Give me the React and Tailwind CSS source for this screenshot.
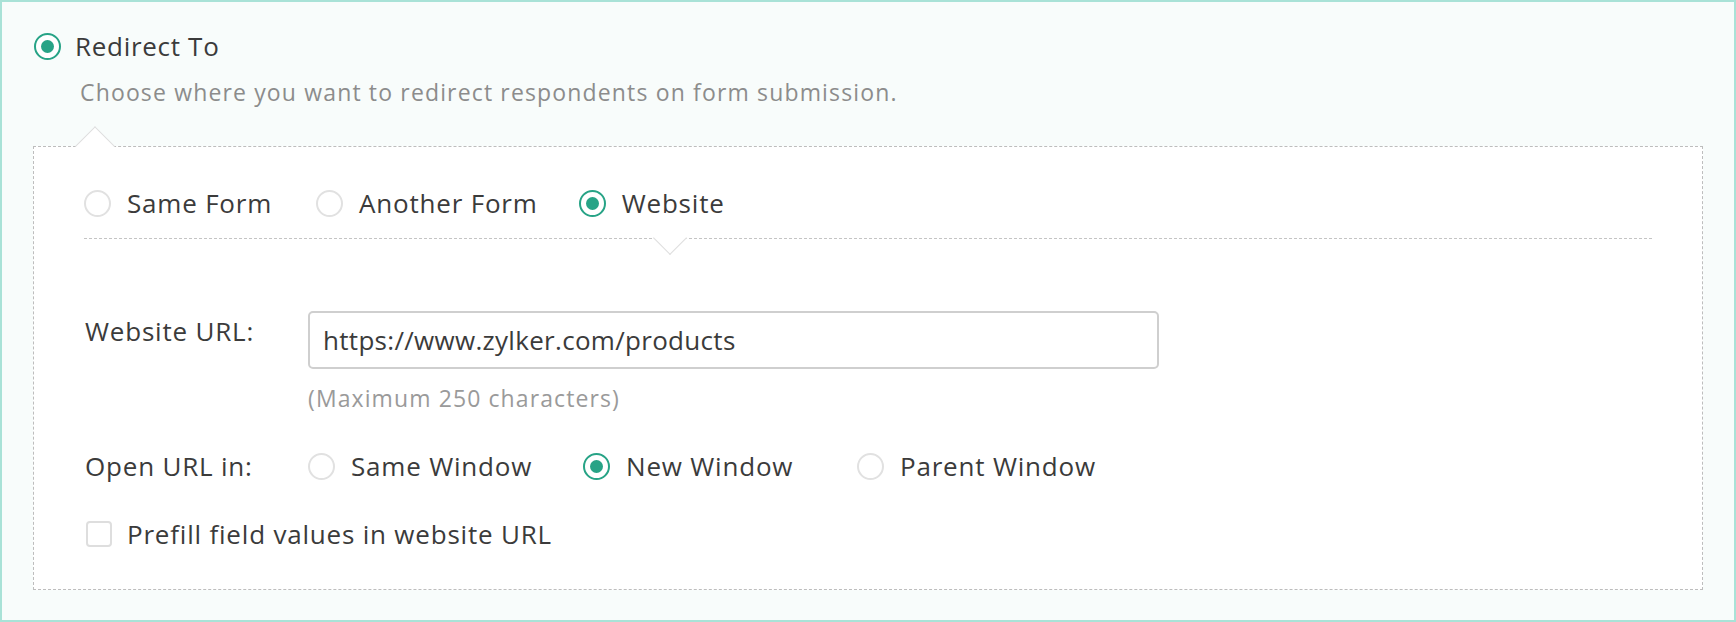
import React from "react";

const font = { fontFamily: "'Open Sans', Lato, sans-serif" };

function Radio({ checked }) {
  if (checked) {
    return (
      <span className="flex h-[27px] w-[27px] shrink-0 items-center justify-center rounded-full border-2 border-[#27a386] bg-white">
        <span className="h-[13px] w-[13px] rounded-full bg-[#27a386]" />
      </span>
    );
  }
  return <span className="h-[27px] w-[27px] shrink-0 rounded-full border-2 border-[#e1e1e1] bg-white" />;
}

function Option({ label, checked, className = "" }) {
  return (
    <label className={`flex items-center gap-4 ${className}`}>
      <Radio checked={checked} />
      <span className="text-[26px] leading-[28px] tracking-[0.8px] text-[#3b3b3b]">{label}</span>
    </label>
  );
}

export default function App() {
  return (
    <div
      className="box-border h-[622px] w-full border-2 border-[#a9e2d7] bg-[#f8fcfb] px-[31px] pt-[30px]"
      style={font}
    >
      {/* Header */}
      <div className="flex h-7 items-center gap-[14px] pl-px">
        <Radio checked />
        <span className="text-[26px] leading-[28px] tracking-[0.7px] text-[#3b3b3b]">Redirect To</span>
      </div>
      <p className="ml-[47px] mt-[17px] text-[23px] leading-[30px] tracking-[1.15px] text-[#8c8c8c]">
        Choose where you want to redirect respondents on form submission.
      </p>

      {/* Dashed panel */}
      <div className="relative mt-[39px] border border-dashed border-[#bdbdbd] bg-white px-[50px] pb-[41px] pt-[42px]">
        <span className="absolute left-[47px] top-[-15px] h-[28px] w-[28px] rotate-45 border-l border-t border-[#dedede] bg-white" />

        <div className="flex items-center">
          <Option label="Same Form" />
          <Option label="Another Form" className="ml-[44px] tracking-[0.5px]" />
          <Option label="Website" checked className="ml-[41px]" />
        </div>

        <div className="relative mt-[21px] border-t border-dashed border-[#c4c4c4]">
          <span className="absolute left-[574px] top-[-13px] h-[24px] w-[24px] rotate-45 border-b border-r border-[#dedede] bg-white" />
        </div>

        {/* Website URL */}
        <div className="mt-[72px] flex items-start">
          <span className="mt-[6px] w-[224px] shrink-0 pl-px text-[26px] leading-[28px] tracking-[0.8px] text-[#3b3b3b]">
            Website URL:
          </span>
          <div>
            <div className="box-border flex h-[58px] w-[851px] items-center rounded-[5px] border-2 border-[#cfcfcf] bg-white px-[13px] text-[26px] tracking-[0.3px] text-[#3b3b3b]">
              https://www.zylker.com/products
            </div>
            <p className="mt-[15px] text-[23px] leading-[28px] tracking-[1.1px] text-[#9a9a9a]">
              (Maximum 250 characters)
            </p>
          </div>
        </div>

        {/* Open URL in */}
        <div className="mt-[40px] flex items-center">
          <span className="w-[224px] shrink-0 pl-px text-[26px] leading-[28px] tracking-[0.8px] text-[#3b3b3b]">
            Open URL in:
          </span>
          <Option label="Same Window" className="w-[275px]" />
          <Option label="New Window" checked className="w-[274px]" />
          <Option label="Parent Window" />
        </div>

        {/* Prefill */}
        <label className="mt-[40px] flex items-center gap-[15px] pl-[2px]">
          <span className="h-[26px] w-[26px] shrink-0 rounded-[4px] border-2 border-[#dedede] bg-white" />
          <span className="text-[26px] leading-[28px] tracking-[0.8px] text-[#3b3b3b]">Prefill field values in website URL</span>
        </label>
      </div>
    </div>
  );
}
